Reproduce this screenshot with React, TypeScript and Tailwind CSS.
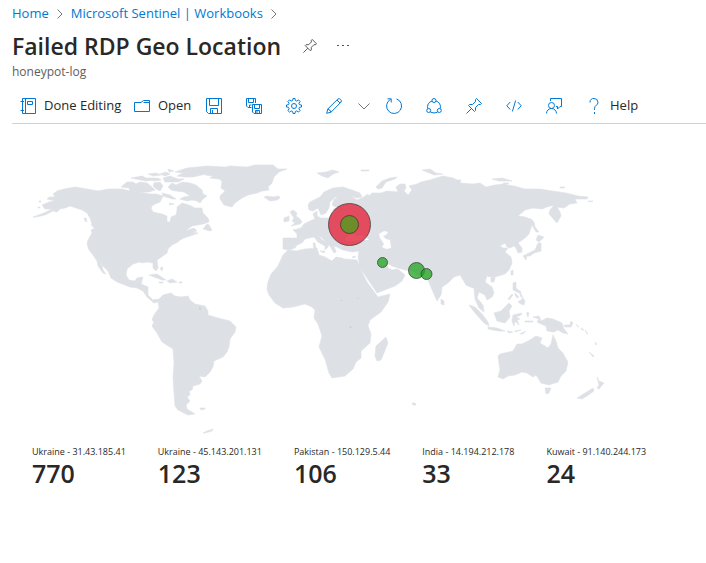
import type { ReactNode } from "react";

const land: string[] = [
  // North and Central America
  "M33 217L44 213L52 209L45 209L42 205L49 202L55 201L47 199L49 197L55 197L53 194L57 191L64 189L75 187L87 189L98 191L108 189L122 189L130 191L140 192L150 194L156 194L163 196L160 202L153 205L151 208L153 212L162 214L167 216L167 222L170 222L171 217L176 215L177 211L177 207L182 203L189 205L195 208L202 208L203 213L208 218L209 222L203 224L192 226L185 231L194 228L197 231L192 232L198 233L190 236L184 238L180 240L178 242L172 245L168 249L167 253L160 258L157 260L158 268L156 271L153 268L153 263L147 262L142 263L140 262L133 264L127 269L126 275L129 280L135 281L137 278L143 277L141 284L148 287L148 295L153 300L158 299L158 302L154 303L147 297L143 291L137 288L130 287L117 282L111 278L108 271L103 266L99 259L102 265L103 270L106 274L103 273L98 266L97 261L93 255L89 250L87 244L88 240L92 233L91 230L95 228L92 224L90 218L87 213L82 210L76 208L70 206L65 208L60 209L57 212L53 211L45 215L36 217Z",
  "M39 201h2v1h-2ZM38 207h2v1h-2ZM84 218l2 0l1 4l-2 -1ZM91 224l3 1l3 5l-4 -3Z",
  // Arctic islands
  "M121 187L127 182L133 182L136 184L140 182L147 183L152 187L155 190L149 192L138 192L130 191L129 188Z",
  "M131 178L142 176L146 178L155 178L154 180L146 181L141 180ZM148 174l8 -1l5 2l-8 1ZM160 174l6 -2l4 2l-5 2ZM154 183l6 -1l3 4l-3 5l-4 -2l-3 -3ZM163 178l7 -2l8 3l6 0l-6 3l-13 0Z",
  "M175 172L187 168L207 166L225 167L215 171L206 174L193 177L185 177L177 176L183 173ZM150 179l8 -1l3 2l-7 1ZM168 169l6 2l-5 1Z",
  "M168 187L172 183L176 185L182 182L190 183L196 185L202 190L203 194L207 196L203 199L200 203L197 201L192 200L187 201L180 199L184 197L190 196L184 192L176 191L171 190ZM162 193l8 2l6 4l-4 0l-9 -3ZM169 203l5 1l-4 1Z",
  "M205 175L209 172L222 168L230 166L247 167L255 165L273 165L278 169L287 169L279 172L274 177L272 183L268 187L269 190L262 191L257 193L248 195L242 198L235 203L232 207L224 205L220 199L220 196L225 191L221 188L222 181L219 179L210 178L213 176Z",
  "M264 197L267 196L273 197L279 196L280 198L277 200L270 201L267 199Z",
  "M203 229L207 224L209 225L212 230L210 231ZM149 275L157 274L166 280L162 280ZM167 281L172 279L177 282L170 283ZM159 282h4v1h-4ZM179 282h3v1h-3ZM160 268l3 -1l-1 4Z",
  // South America
  "M158 300L163 295L171 293L175 296L181 297L188 296L190 300L195 304L205 306L208 311L208 315L218 318L230 321L236 327L235 332L230 339L229 347L227 352L223 357L214 361L213 367L210 372L205 377L199 376L202 381L200 384L193 386L192 390L189 391L190 395L187 397L190 401L186 405L187 409L195 414L188 415L178 410L175 406L174 393L173 378L174 363L173 349L162 342L157 333L152 326L154 322L152 320L154 315L159 308Z",
  "M200 408h5v1l-4 1ZM203 433l4 -2l6 -2l-1 2l-7 2Z",
  // Europe and Asia
  "M308 205L310 202L320 197L324 192L333 188L343 187L352 190L360 193L362 197L357 198L351 196L357 200L362 198L368 194L369 196L372 193L381 193L387 191L398 192L396 187L400 184L405 184L406 188L404 191L408 195L412 190L409 186L417 184L421 182L430 180L436 178L443 176L453 178L457 180L461 180L460 183L473 184L480 183L486 187L495 185L503 184L514 186L525 189L540 189L552 191L566 193L578 196L588 197L587 199L575 199L577 203L570 204L564 208L557 207L560 212L561 216L557 223L549 214L550 210L554 205L547 207L542 209L533 208L525 210L518 216L525 217L530 219L532 225L529 234L525 238L518 243L522 248L522 252L518 253L516 248L514 246L510 248L507 247L505 243L500 246L503 248L508 248L505 252L511 257L512 263L509 270L505 274L498 276L493 278L487 276L485 282L492 287L494 293L492 297L487 300L485 295L479 292L477 298L483 305L484 312L479 308L475 299L474 288L470 287L466 285L460 275L454 277L448 283L442 287L441 295L437 301L433 292L428 280L422 276L417 275L413 271L405 270L398 268L392 266L387 263L388 268L392 270L397 269L399 270L405 275L402 281L395 286L382 291L377 293L373 287L365 275L359 267L359 261L358 257L359 251L352 252L343 250L337 247L334 246L336 252L334 253L330 246L322 238L319 235L321 239L329 244L328 247L325 250L325 246L318 242L314 237L309 238L305 239L302 243L297 245L295 248L289 250L283 249L283 244L283 238L290 238L297 238L297 234L293 230L301 228L304 224L310 221L315 219L313 214L317 211L317 216L321 218L330 218L332 213L335 212L333 209L338 208L342 207L335 207L332 205L334 199L338 198L335 197L330 202L329 208L326 213L321 215L318 208L313 211L309 210Z",
  "M284 222L284 218L289 216L289 221ZM290 212L293 210L297 213L296 216L300 219L302 222L300 224L291 226L295 223L292 221L294 218ZM313 243l2 0l1 6l-2 0ZM320 251l5 0l-1 2ZM336 258l6 0l0 1l-6 0ZM352 257l4 -1l-2 2Z",
  "M317 173L326 172L333 170L339 172L333 174L328 178L322 176ZM361 170h8v1h-8ZM376 187L382 181L390 178L397 177L395 179L386 182L382 188L378 189ZM422 170L430 169L436 173L443 174L434 175ZM492 179L502 178L512 181L499 181ZM503 183l6 0l-4 2ZM560 187l5 0l-1 1l-4 0ZM588 201l5 0l-3 1Z",
  "M530 218L534 222L535 227L539 232L536 232L532 225ZM538 235L544 237L539 242L536 240ZM538 243L541 243L541 251L534 253L530 256L527 256L526 260L523 256L529 253L535 250ZM511 271l2 -1l0 5l-2 0ZM491 278l4 0l-1 4l-3 0ZM441 299l3 2l0 4l-3 -1Z",
  // Africa
  "M288 250L296 251L305 249L317 248L319 255L325 257L332 261L336 257L345 259L357 260L360 268L367 282L375 293L378 297L390 294L388 302L381 312L370 320L368 326L371 334L370 343L361 351L361 358L356 362L353 369L345 376L332 378L329 373L325 359L319 347L322 336L318 324L314 318L315 310L312 307L305 304L293 307L283 308L275 303L269 295L267 289L268 282L271 274L278 266L283 255Z",
  "M386 337L388 343L381 360L377 361L375 356L376 346Z",
  // Southeast Asia and the Pacific
  "M469 305L475 307L482 314L488 322L489 326L484 323L475 313ZM488 327L497 328L505 331L498 331L488 329ZM507 331l6 1l-4 1ZM515 331l6 -1l-6 2ZM520 334l6 -3l-3 3ZM494 313L501 311L509 303L512 306L509 311L510 317L505 323L497 321ZM513 315L522 313L521 315L516 317L520 319L517 320L519 325L515 321L514 326L512 321ZM527 312l2 1l-1 4l-1 -2ZM525 321l8 0l0 1l-8 0ZM513 283L516 282L516 288L521 292L521 294L513 290ZM515 293l4 4l-2 1l-2 -3ZM521 294l2 4l-3 -2ZM508 299l4 -5l1 1l-4 5ZM518 302L521 300L523 298L525 301L524 305L521 304Z",
  "M533 317L539 316L541 321L547 318L553 319L562 323L564 329L568 334L563 333L558 330L554 332L547 331L546 326L541 324L537 322L539 319ZM564 325l6 0l1 -4l2 2l-2 4l-6 0ZM576 324l3 3l-1 0ZM581 328l3 2l-2 0ZM585 330l3 4l-1 0ZM595 342l2 2l-1 1ZM589 352l5 4l-1 1Z",
  "M498 356L500 354L513 351L517 344L522 344L528 341L533 338L536 336L542 338L540 343L548 348L551 344L553 335L556 341L558 348L563 353L565 357L568 362L566 371L561 376L558 382L549 385L541 383L538 378L536 375L533 377L527 373L522 372L515 375L508 376L503 379L498 377L500 370Z",
  "M545 388L551 388L549 393L546 394ZM597 377L599 381L604 383L599 389L597 388L599 385ZM593 388L594 391L587 396L582 399L577 398L585 393ZM412 403l3 0l1 2l-3 0Z",
];

const water: string[] = [
  "M379 234L384 231L388 232L386 235L383 236L386 239L390 240L391 248L386 249L382 247L384 244L380 238Z",
  "M345 239L349 235L353 234L356 236L361 235L366 237L369 240L361 240L354 241L347 241Z",
];

const points = [
  { name: "Ukraine", x: 349.5, y: 224.5, r: 21, color: "#e32b40", opacity: 0.82 },
  { name: "Ukraine", x: 349.5, y: 224.5, r: 9, color: "#4f9e1c", opacity: 0.8 },
  { name: "Pakistan", x: 416.5, y: 270.5, r: 8, color: "#20a31d", opacity: 0.75 },
  { name: "India", x: 426.5, y: 274, r: 5.5, color: "#20a31d", opacity: 0.75 },
  { name: "Kuwait", x: 382.5, y: 262.5, r: 5, color: "#20a31d", opacity: 0.75 },
];

const tiles = [
  { label: "Ukraine - 31.43.185.41", value: 770 },
  { label: "Ukraine - 45.143.201.131", value: 123 },
  { label: "Pakistan - 150.129.5.44", value: 106 },
  { label: "India - 14.194.212.178", value: 33 },
  { label: "Kuwait - 91.140.244.173", value: 24 },
];

function Icon({ children }: { children: ReactNode }) {
  return (
    <svg aria-hidden="true" viewBox="0 0 16 16" className="size-4 shrink-0" fill="none" stroke="currentColor">
      {children}
    </svg>
  );
}

const pin = <path d="M.5 15.5L5.5 10.5M2.5 7.5L8.5 13.5L9.5 12.5V9.5L12.5 6.5H14.5L15.5 5.5L10.5.5L9.5 1.5V3.5L6.5 6.5H3.5Z" />;

const tools: { label: string; icon: ReactNode }[] = [
  {
    label: "Save",
    icon: <path d="M.5.5H15.5V15.5H2.5L.5 13.5ZM3.5.5V7.5H12.5V.5M4.5 15.5V10.5H11.5V15.5M6.5 12V15.5" />,
  },
  {
    label: "Save as",
    icon: (
      <path d="M5.5 9.5H2L.5 8V.5H9.5V5M2.5.5V4.5H7.5V.5M3.5 9.5V7H5.5M6.5 6.5H15.5V15.5H8L6.5 14ZM8.5 6.5V10.5H13.5V6.5M9.5 15.5V12.5H13.5V15.5M11 13V15.5" />
    ),
  },
  {
    label: "Settings",
    icon: (
      <>
        <path d="M6.7 2.5L7 .5H9L9.3 2.5L10.8 3.1L12.5 1.9L14.1 3.5L12.9 5.2L13.5 6.7L15.5 7V9L13.5 9.3L12.9 10.8L14.1 12.5L12.5 14.1L10.8 12.9L9.3 13.5L9 15.5H7L6.7 13.5L5.2 12.9L3.5 14.1L1.9 12.5L3.1 10.8L2.5 9.3L.5 9V7L2.5 6.7L3.1 5.2L1.9 3.5L3.5 1.9L5.2 3.1Z" />
        <circle cx="8" cy="8" r="2.5" />
      </>
    ),
  },
];

const moreTools: { label: string; icon: ReactNode }[] = [
  { label: "Refresh", icon: <path d="M10.5.9A7.5 7.5 0 1 1 4.5 1.4M1.5.8H5.2V4.5" /> },
  {
    label: "Share",
    icon: (
      <>
        <circle cx="8" cy="2.5" r="2" />
        <circle cx="2.7" cy="12.5" r="2" />
        <circle cx="13.3" cy="12.5" r="2" />
        <path d="M6 3A6 6 0 0 0 1.8 10.6M10 3A6 6 0 0 1 14.2 10.6M4.5 14.2Q8 15.8 11.5 14.2" />
      </>
    ),
  },
  { label: "Pin", icon: pin },
  { label: "Advanced editor", icon: <path d="M4.2 4L.8 7.8L4.2 11.5M11.8 4L15.2 7.8L11.8 11.5M9.6 2.5L6.4 13.5" /> },
  {
    label: "Feedback",
    icon: (
      <>
        <circle cx="5.5" cy="7.5" r="3" />
        <path d="M.5 15.5A5 5 0 0 1 10.5 15.5M4.5 3V.5H15.5V8.5H14L11.5 11V8.5H10" />
      </>
    ),
  },
];

function ToolButton({ label, icon }: { label: string; icon: ReactNode }) {
  return (
    <button type="button" aria-label={label} className="mr-2 text-[#0078d4]">
      <Icon>{icon}</Icon>
    </button>
  );
}

function Chevron() {
  return (
    <svg aria-hidden="true" viewBox="0 0 6 10" className="h-[10px] w-[6px]" fill="none" stroke="#767676">
      <path d="M.5.5L5 5L.5 9.5" />
    </svg>
  );
}

export default function App() {
  return (
    <main className="min-h-screen bg-white font-['Open_Sans','Noto_Sans',sans-serif] text-[#292827]">
      <header className="pl-3">
        <nav aria-label="Breadcrumb" className="flex h-7 items-center gap-2 text-[13px] text-[#0078d4]">
          <a href="#home">Home</a>
          <Chevron />
          <a href="#workbooks">Microsoft Sentinel | Workbooks</a>
          <Chevron />
        </nav>
        <div className="flex h-9 items-center">
          <h1 className="text-[23px] font-semibold whitespace-nowrap">Failed RDP Geo Location</h1>
          <button type="button" aria-label="Pin workbook" className="ml-[22px] text-[#444]">
            <svg aria-hidden="true" viewBox="0 0 16 16" className="size-[14px]" fill="none" stroke="currentColor">
              {pin}
            </svg>
          </button>
          <button type="button" aria-label="More" className="ml-5">
            <svg aria-hidden="true" viewBox="0 0 12 4" className="h-1 w-3" fill="#555">
              <path d="M0 1h2v1H0zM5 1h2v1H5zM10 1h2v1h-2z" />
            </svg>
          </button>
        </div>
        <p className="text-xs leading-4 text-[#605e5c]">honeypot-log</p>

        <div role="toolbar" aria-label="Workbook" className="mt-2 flex h-9 items-center gap-4 border-b border-[#d2d2d2] pl-2 text-[13px]">
          <button type="button" className="flex w-[98px] items-center gap-2 whitespace-nowrap">
            <span className="text-[#0078d4]">
              <Icon>
                <path d="M2.5.5H15.5V15.5H2.5ZM5.5.5V15.5M7.5 3.5H12.5V6.5H7.5ZM.5 3.5H4M.5 12.5H4" />
              </Icon>
            </span>
            Done Editing
          </button>
          <button type="button" className="flex w-14 items-center gap-2 whitespace-nowrap">
            <span className="text-[#0078d4]">
              <Icon>
                <path d="M.5 4.5H7L9.5 2.5H15.5V13.5H.5ZM9.5 4.5H15.5" />
              </Icon>
            </span>
            Open
          </button>
          {tools.map((tool) => (
            <ToolButton key={tool.label} {...tool} />
          ))}
          <button type="button" aria-label="Edit" className="text-[#0078d4]">
            <Icon>
              <path d="M.7 15.3L1.8 11L12 .9Q13.3 .2 14.6 1.4Q15.8 2.7 15.1 4L5 14.2ZM1.8 11Q4.3 11.6 5 14.2M11 2L14 5" />
            </Icon>
          </button>
          <button type="button" aria-label="Edit options">
            <svg aria-hidden="true" viewBox="0 0 12 8" className="h-2 w-3" fill="none" stroke="#767676">
              <path d="M.5 1.5L6 7L11.5 1.5" />
            </svg>
          </button>
          {moreTools.map((tool) => (
            <ToolButton key={tool.label} {...tool} />
          ))}
          <button type="button" className="flex items-center gap-2">
            <span className="text-[#0078d4]">
              <Icon>
                <path d="M4 4.5V4A3.5 3.5 0 0 1 8 .5A4 4 0 0 1 12 4.3C12 7.3 8.5 7.3 8.5 10.5V12M8.5 14V16" />
              </Icon>
            </span>
            Help
          </button>
        </div>
      </header>

      <svg
        role="img"
        aria-label="Failed sign-ins by location"
        viewBox="0 124 706 316"
        className="block w-full max-w-[706px]"
      >
        <path d={land.join("")} fill="#dde0e5" stroke="#dde0e5" strokeWidth="0.6" strokeLinejoin="round" />
        <path d={water.join("")} fill="#fff" />
        <path d="M200 307v3M341 300l1 1M358 298v1M350 326l1 2" stroke="#c3c9d0" />
        {points.map((p) => (
          <circle
            key={`${p.name}-${p.r}`}
            cx={p.x}
            cy={p.y}
            r={p.r}
            fill={p.color}
            fillOpacity={p.opacity}
            stroke="#333"
            strokeOpacity="0.7"
          />
        ))}
      </svg>

      <dl className="flex gap-8 px-8 pt-1.5">
        {tiles.map((tile) => (
          <div key={tile.label} className="whitespace-nowrap">
            <dt className="text-[9px] leading-3">{tile.label}</dt>
            <dd className="text-[25px] leading-[30px] font-semibold">{tile.value}</dd>
          </div>
        ))}
      </dl>
    </main>
  );
}
